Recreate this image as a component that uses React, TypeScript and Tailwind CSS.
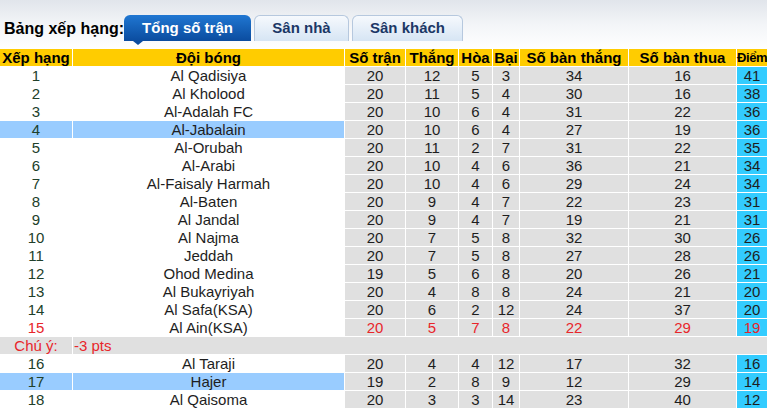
import React from 'react';

interface Row {
  rank: number;
  team: string;
  played: number;
  won: number;
  draw: number;
  lost: number;
  gf: number;
  ga: number;
  pts: number;
  highlight?: boolean;
  red?: boolean;
}

const rows: Row[] = [
  { rank: 1, team: 'Al Qadisiya', played: 20, won: 12, draw: 5, lost: 3, gf: 34, ga: 16, pts: 41 },
  { rank: 2, team: 'Al Kholood', played: 20, won: 11, draw: 5, lost: 4, gf: 30, ga: 16, pts: 38 },
  { rank: 3, team: 'Al-Adalah FC', played: 20, won: 10, draw: 6, lost: 4, gf: 31, ga: 22, pts: 36 },
  { rank: 4, team: 'Al-Jabalain', played: 20, won: 10, draw: 6, lost: 4, gf: 27, ga: 19, pts: 36, highlight: true },
  { rank: 5, team: 'Al-Orubah', played: 20, won: 11, draw: 2, lost: 7, gf: 31, ga: 22, pts: 35 },
  { rank: 6, team: 'Al-Arabi', played: 20, won: 10, draw: 4, lost: 6, gf: 36, ga: 21, pts: 34 },
  { rank: 7, team: 'Al-Faisaly Harmah', played: 20, won: 10, draw: 4, lost: 6, gf: 29, ga: 24, pts: 34 },
  { rank: 8, team: 'Al-Baten', played: 20, won: 9, draw: 4, lost: 7, gf: 22, ga: 23, pts: 31 },
  { rank: 9, team: 'Al Jandal', played: 20, won: 9, draw: 4, lost: 7, gf: 19, ga: 21, pts: 31 },
  { rank: 10, team: 'Al Najma', played: 20, won: 7, draw: 5, lost: 8, gf: 32, ga: 30, pts: 26 },
  { rank: 11, team: 'Jeddah', played: 20, won: 7, draw: 5, lost: 8, gf: 27, ga: 28, pts: 26 },
  { rank: 12, team: 'Ohod Medina', played: 19, won: 5, draw: 6, lost: 8, gf: 20, ga: 26, pts: 21 },
  { rank: 13, team: 'Al Bukayriyah', played: 20, won: 4, draw: 8, lost: 8, gf: 24, ga: 21, pts: 20 },
  { rank: 14, team: 'Al Safa(KSA)', played: 20, won: 6, draw: 2, lost: 12, gf: 24, ga: 37, pts: 20 },
  { rank: 15, team: 'Al Ain(KSA)', played: 20, won: 5, draw: 7, lost: 8, gf: 22, ga: 29, pts: 19, red: true },
];

const rowsAfter: Row[] = [
  { rank: 16, team: 'Al Taraji', played: 20, won: 4, draw: 4, lost: 12, gf: 17, ga: 32, pts: 16 },
  { rank: 17, team: 'Hajer', played: 19, won: 2, draw: 8, lost: 9, gf: 12, ga: 29, pts: 14, highlight: true },
  { rank: 18, team: 'Al Qaisoma', played: 20, won: 3, draw: 3, lost: 14, gf: 23, ga: 40, pts: 12 },
];

const headers = ['Xếp hạng', 'Đội bóng', 'Số trận', 'Thắng', 'Hòa', 'Bại', 'Số bàn thắng', 'Số bàn thua'];

function TableRow({ r }: { r: Row }) {
  const txt = r.red ? 'text-[#e8262b]' : 'text-[#1e1e1e]';
  const left = r.highlight ? 'bg-[#99ccff]' : 'bg-white';
  const cell = `h-[17px] leading-[17px] text-center bg-[#e0e0e0] ${txt}`;
  return (
    <>
      <div className={`h-[17px] leading-[17px] text-center ${left} ${r.red ? 'text-[#e8262b]' : 'text-[#21402a]'}`}>{r.rank}</div>
      <div className={`h-[17px] leading-[17px] text-center ${left} text-[#1e1e1e]`}>{r.team}</div>
      <div className={cell}>{r.played}</div>
      <div className={cell}>{r.won}</div>
      <div className={cell}>{r.draw}</div>
      <div className={cell}>{r.lost}</div>
      <div className={cell}>{r.gf}</div>
      <div className={cell}>{r.ga}</div>
      <div className={`h-[17px] leading-[17px] text-center bg-[#33ccff] ${txt}`}>{r.pts}</div>
    </>
  );
}

export default function App() {
  return (
    <div className="w-[767px] h-[408px] overflow-hidden bg-white font-['Liberation_Sans',Arial,sans-serif]">
      {/* Tabs */}
      <div className="h-[49px] bg-gradient-to-b from-[#e1e5eb] via-[#f3f5f8] to-white flex items-start pt-[15px] pl-[4px]">
        <div className="w-[120px] text-[16px] font-bold text-black leading-[26px] pt-px whitespace-nowrap">Bảng xếp hạng:</div>
        <div className="relative w-[127px] h-[26px] rounded-t-[6px] bg-gradient-to-b from-[#2077d2] to-[#0b4c9f] text-white text-[15px] font-bold leading-[26px] text-center">
          Tổng số trận
          <div className="absolute left-[9px] top-[26px] w-0 h-0 border-l-[5px] border-r-[5px] border-t-[4px] border-l-transparent border-r-transparent border-t-[#0b4c9f]" />
        </div>
        <div className="ml-[3px] w-[95px] h-[26px] rounded-t-[6px] border border-b-0 border-[#b6c8de] bg-gradient-to-b from-[#f6f9fd] to-[#d6e5f4] text-[#1b3766] text-[15px] font-bold leading-[24px] text-center">
          Sân nhà
        </div>
        <div className="ml-[3px] w-[111px] h-[26px] rounded-t-[6px] border border-b-0 border-[#b6c8de] bg-gradient-to-b from-[#f6f9fd] to-[#d6e5f4] text-[#1b3766] text-[15px] font-bold leading-[24px] text-center">
          Sân khách
        </div>
      </div>

      {/* Table */}
      <div className="grid grid-cols-[72px_271px_60px_52px_33px_26px_108px_107px_30px] gap-px bg-white text-[15px]">
        {headers.map((h) => (
          <div key={h} className="h-[17px] leading-[17px] bg-[#ffcc00] text-black font-bold text-[15px] text-center whitespace-nowrap overflow-hidden">
            {h}
          </div>
        ))}
        <div className="h-[17px] leading-[17px] bg-[#ffcc00] text-black font-bold text-[13px] tracking-[-0.4px] whitespace-nowrap">
          Điểm
        </div>
        {rows.map((r) => (
          <TableRow key={r.rank} r={r} />
        ))}
        <div className="h-[17px] leading-[17px] bg-[#e0e0e0] text-[#e8262b] text-center">Chú ý:</div>
        <div className="col-span-8 h-[17px] leading-[17px] bg-[#e0e0e0] text-[#e8262b] pl-px">-3 pts</div>
        {rowsAfter.map((r) => (
          <TableRow key={r.rank} r={r} />
        ))}
      </div>
    </div>
  );
}
